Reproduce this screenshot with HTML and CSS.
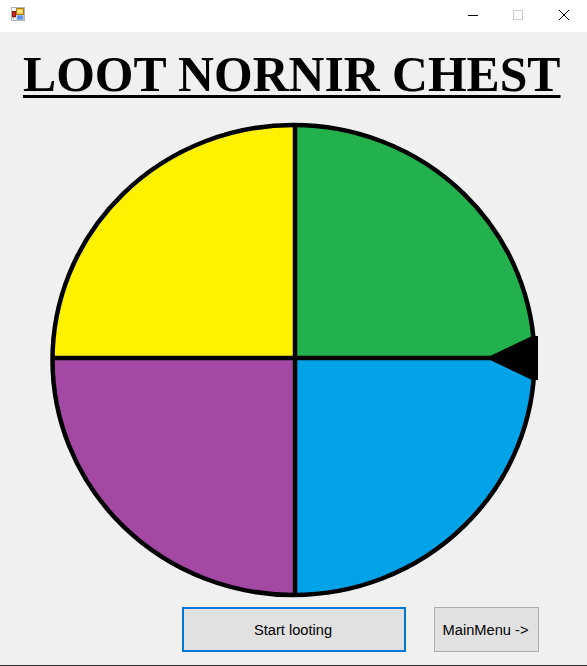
FILE: index.html
```html
<!DOCTYPE html>
<html lang="en">
<head>
<meta charset="utf-8">
<title>Loot Nornir Chest</title>
<link rel="stylesheet" href="styles.css">
</head>
<body>
<div class="window">
  <header class="titlebar">
    <svg class="app-icon" width="16" height="16" viewBox="0 0 16 16">
      <rect x="1.500" y="0.500" width="13" height="13" fill="#fff" stroke="#b4b4b4"/>
      <path d="M1 10.500h5M3.500 10.500v3M13 5v9" stroke="#b4b4b4" fill="none"/>
      <rect x="6.500" y="1.500" width="7" height="6" fill="#f3c640" stroke="#a8811c"/>
      <rect x="8" y="3" width="4" height="3" fill="#fbe38a"/>
      <rect x="2.500" y="4.500" width="3" height="5" fill="#cf2a1c" stroke="#8a1a10"/>
      <rect x="7" y="8.500" width="6" height="4" fill="#5c8fe8" stroke="#8db0ee"/>
    </svg>
    <div class="controls">
      <svg class="ctl" width="46" height="32" viewBox="0 0 46 32"><path d="M19 15.500h10" stroke="#000" fill="none"/></svg>
      <svg class="ctl" width="46" height="32" viewBox="0 0 46 32"><rect x="18.500" y="10.500" width="9" height="9" stroke="#ccc" fill="none"/></svg>
      <svg class="ctl" width="46" height="32" viewBox="0 0 46 32"><path d="M18 10l10 10M28 10l-10 10" stroke="#000" fill="none"/></svg>
    </div>
  </header>
  <main class="content">
    <h1 class="heading">LOOT NORNIR CHEST</h1>
    <svg class="wheel" width="490" height="476" viewBox="0 0 490 476">
      <clipPath id="disc"><ellipse cx="243.500" cy="238" rx="241" ry="235"/></clipPath>
      <g clip-path="url(#disc)">
        <rect x="245" y="0" width="245" height="236" fill="#22b14c"/>
        <rect x="245" y="236" width="245" height="240" fill="#00a2e8"/>
        <rect x="0" y="236" width="245" height="240" fill="#a349a4"/>
        <rect x="0" y="0" width="245" height="236" fill="#fff200"/>
      </g>
      <ellipse cx="243.500" cy="238" rx="241" ry="235" fill="none" stroke="#000" stroke-width="4.500"/>
      <path d="M245 3V473M3 236H484" stroke="#000" stroke-width="4.500" fill="none"/>
      <path d="M436 236L482 214L488 214V258H482Z" fill="#000"/>
    </svg>
    <div class="actions">
      <button class="btn btn-primary" type="button">Start looting</button>
      <button class="btn btn-menu" type="button">MainMenu -&gt;</button>
    </div>
  </main>
</div>
</body>
</html>
```
FILE: styles.css
```css
html, body {
  margin: 0;
  padding: 0;
  height: 100%;
  overflow: hidden;
}

.window {
  height: 666px;
  box-sizing: border-box;
  background: #f0f0f0;
  border-bottom: 1px solid #2a2a2a;
  display: flex;
  flex-direction: column;
}

.titlebar {
  height: 32px;
  flex: none;
  background: #fff;
  display: flex;
  align-items: center;
  justify-content: space-between;
  padding-left: 10px;
}

.app-icon {
  margin-top: -2px;
}

.controls {
  display: flex;
}

.ctl {
  display: block;
}

.content {
  flex: 1;
  display: flex;
  flex-direction: column;
  align-items: stretch;
}

.heading {
  margin: 13px 0 0 23px;
  width: 537px;
  font-family: "Liberation Serif", "Times New Roman", serif;
  font-weight: bold;
  font-size: 49.7px;
  line-height: 60px;
  color: #000;
  white-space: nowrap;
  text-decoration: underline;
  text-decoration-thickness: 3px;
  text-underline-offset: 4px;
}

.wheel {
  display: block;
  margin: 17px 0 0 50px;
}

.actions {
  display: flex;
  gap: 28px;
  margin: 9px 0 0 182px;
}

.btn {
  height: 45px;
  padding: 0 2px 0 0;
  background: #e1e1e1;
  color: #000;
  font-family: "Liberation Sans", Arial, sans-serif;
  font-size: 14.67px;
  box-sizing: border-box;
  border-radius: 0;
}

.btn-primary {
  width: 224px;
  border: 2px solid #0078d7;
}

.btn-menu {
  width: 105px;
  border: 1px solid #adadad;
}
```
